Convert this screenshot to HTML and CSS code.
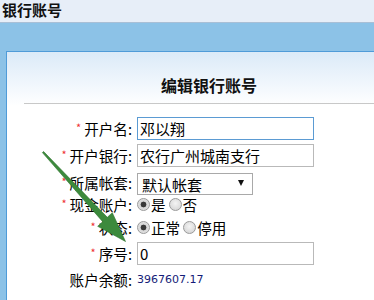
FILE: index.html
```html
<!DOCTYPE html>
<html lang="zh-CN">
<head>
<meta charset="UTF-8">
<title>银行账号</title>
<link rel="stylesheet" href="styles.css">
</head>
<body>

<div class="topbar">
    <h1>银行账号</h1>
</div>

<div class="main">
    <div class="panel">
        <h2 class="panel-title">编辑银行账号</h2>
        <div class="divider"></div>

        <form class="bank-form">
            <div class="row">
                <label class="field-label"><span class="star">*</span>开户名:</label>
                <input type="text" class="text-input focused" value="邓以翔">
            </div>
            <div class="row">
                <label class="field-label"><span class="star">*</span>开户银行:</label>
                <input type="text" class="text-input" value="农行广州城南支行">
            </div>
            <div class="row row-select">
                <label class="field-label"><span class="star">*</span>所属帐套:</label>
                <div class="select-wrap">
                    <select class="select-input">
                        <option>默认帐套</option>
                    </select>
                </div>
            </div>
            <div class="row row-radio">
                <label class="field-label"><span class="star">*</span>现金账户:</label>
                <input type="radio" name="cash" checked><span class="opt">是</span>
                <input type="radio" name="cash"><span class="opt">否</span>
            </div>
            <div class="row row-radio row-radio2">
                <label class="field-label"><span class="star">*</span>状态:</label>
                <input type="radio" name="status" checked><span class="opt">正常</span>
                <input type="radio" name="status"><span class="opt">停用</span>
            </div>
            <div class="row row-seq">
                <label class="field-label"><span class="star">*</span>序号:</label>
                <input type="text" class="text-input" value="0">
            </div>
            <div class="row row-balance">
                <label class="field-label">账户余额:</label>
                <span class="balance">3967607.17</span>
            </div>
        </form>
    </div>
</div>

<!-- annotation arrow drawn over the form -->
<svg class="arrow" width="374" height="300" viewBox="0 0 374 300">
    <polygon points="43.6,151.5 107.3,217.3 112.3,212.7 125.5,241.5 97.7,226.3 102.7,221.7 42.4,152.6"
             fill="#3c8a3c" stroke="#2b702b" stroke-width="0.6" stroke-linejoin="round"/>
</svg>

</body>
</html>
```

FILE: styles.css
```css
body {
    margin: 0;
    background-color: #8cc2e7;
    font-family: "Noto Sans CJK SC", "Noto Sans", sans-serif;
    overflow: hidden;
    height: 300px;
}

.topbar {
    height: 22px;
    background-color: #e7eef8;
    border-bottom: 1px solid #a9bfd6;
}

.topbar h1 {
    margin: 0;
    padding-left: 2px;
    font-size: 15px;
    line-height: 20px;
    font-weight: bold;
    color: #111;
}

.main {
    padding: 28px 0 0 6px;
    height: 249px;
    overflow: hidden;
}

.panel {
    width: 404px;
    height: 260px;
    border: 1px solid #4f9bd8;
    background: linear-gradient(#dbeaf8, #ffffff 54px);
}

.panel-title {
    margin: 0;
    padding-top: 23px;
    font-size: 16px;
    line-height: 20px;
    font-weight: bold;
    text-align: center;
    color: #111;
}

.divider {
    margin: 8px 0 0 17px;
    border-top: 1px solid #c8c8c8;
}

.bank-form {
    padding-top: 13px;
}

.row {
    display: flex;
    align-items: center;
    height: 23px;
    margin-bottom: 4px;
}

.field-label {
    width: 125px;
    margin-right: 5px;
    text-align: right;
    font-size: 14.6px;
    color: #000;
    white-space: nowrap;
}

.star {
    color: #ee3030;
    font-size: 11px;
    margin-right: 3px;
    vertical-align: 3px;
}

.text-input {
    width: 177px;
    height: 23px;
    box-sizing: border-box;
    margin: 0;
    padding: 0 2px;
    border: 1px solid #b9b9b9;
    font-family: "Noto Sans CJK SC", sans-serif;
    font-size: 15px;
    color: #000;
    background: #fff;
    outline: none;
}

.text-input.focused {
    border-color: #5b9bd3;
}

.row-select {
    height: 23px;
    margin-bottom: 0;
}

.select-wrap {
    position: relative;
    height: 22px;
}

.select-wrap::after {
    content: "";
    position: absolute;
    right: 9px;
    top: 8px;
    border-left: 3px solid transparent;
    border-right: 3px solid transparent;
    border-top: 6px solid #111;
}

.select-input {
    -webkit-appearance: none;
    appearance: none;
    width: 116px;
    height: 22px;
    margin: 0;
    padding: 0 4px;
    border: 1px solid #a9a9a9;
    border-radius: 0;
    background: #fff;
    font-family: "Noto Sans CJK SC", sans-serif;
    font-size: 15px;
    color: #000;
}

.row-radio {
    height: 20px;
    margin-bottom: 3px;
}

.row-radio2 {
    margin-bottom: 5px;
}

.row-radio input {
    -webkit-appearance: none;
    appearance: none;
    width: 13px;
    height: 13px;
    margin: 0 1px 0 0;
    border: 1px solid #9a9a9a;
    border-radius: 50%;
    background: radial-gradient(circle at 50% 40%, #f4f4f4, #cfcfcf);
}

.row-radio input:checked {
    background: radial-gradient(circle, #3a3a3a 0 2.6px, #d6d6d6 3.2px, #ececec);
}

.opt {
    font-size: 14.6px;
    margin-right: 3px;
    color: #000;
}

.row-seq {
    margin-bottom: 4px;
}

.row-balance {
    height: 20px;
}

.balance {
    font-family: "DejaVu Sans", sans-serif;
    font-size: 11px;
    color: #141c78;
}

.arrow {
    position: absolute;
    left: 0;
    top: 0;
    pointer-events: none;
}
```
